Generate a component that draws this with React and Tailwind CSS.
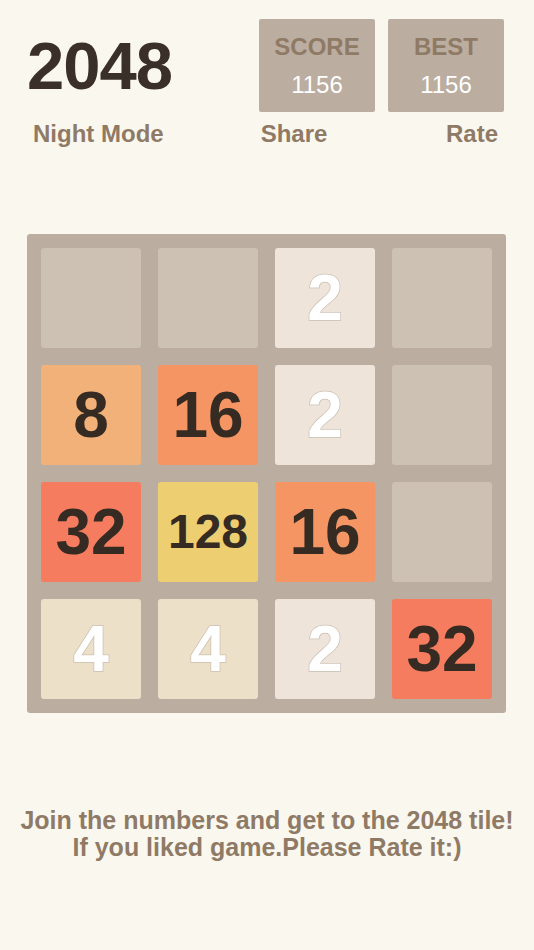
import React from "react";

const board = [
  [0, 0, 2, 0],
  [8, 16, 2, 0],
  [32, 128, 16, 0],
  [4, 4, 2, 32],
];

const tileStyles = {
  0: "bg-[#cdc1b4]",
  2: "bg-[#eee4da] text-white text-[64px] [-webkit-text-stroke:1.5px_#cbbfb2] [paint-order:stroke_fill]",
  4: "bg-[#ede0c8] text-white text-[64px] [-webkit-text-stroke:1.5px_#cbbfb2] [paint-order:stroke_fill]",
  8: "bg-[#f2b179] text-[#352b22] text-[64px]",
  16: "bg-[#f59563] text-[#352b22] text-[64px]",
  32: "bg-[#f67c5f] text-[#352b22] text-[64px]",
  128: "bg-[#edcf72] text-[#352b22] text-[48px]",
};

function Tile({ value }) {
  return (
    <div
      className={`h-[100px] w-[100px] rounded-[3px] flex items-center justify-center font-bold leading-none ${tileStyles[value]}`}
    >
      {value > 0 ? value : ""}
    </div>
  );
}

function ScoreBox({ label, value }) {
  return (
    <div className="w-[116px] h-[93px] rounded-[2px] bg-[#bbada0] flex flex-col items-center pt-[16px]">
      <span className="text-[24px] leading-[24px] font-bold text-[#8f7a66]">{label}</span>
      <span className="mt-[14px] text-[24px] leading-[24px] text-white">{value}</span>
    </div>
  );
}

export default function App() {
  return (
    <div
      className="min-h-[950px] w-full bg-[#faf7ef] flex flex-col"
      style={{ fontFamily: '"Liberation Sans", Arial, sans-serif' }}
    >
      <div className="flex items-center pt-[19px] pl-[27px] pr-[30px]">
        <h1 className="text-[67px] leading-none font-bold text-[#3a3029] tracking-[-1px]">2048</h1>
        <div className="ml-auto flex gap-[13px]">
          <ScoreBox label="SCORE" value="1156" />
          <ScoreBox label="BEST" value="1156" />
        </div>
      </div>

      <div className="flex mt-[10px] text-[24px] leading-[24px] font-bold text-[#8f7a66]">
        <span className="ml-[33px]">Night Mode</span>
        <span className="ml-[97px]">Share</span>
        <span className="ml-auto mr-[36px]">Rate</span>
      </div>

      <div className="mt-[88px] ml-[27px] w-[479px] rounded-[3px] bg-[#bbada0] p-[14px] grid grid-cols-4 gap-[17px]">
        {board.flat().map((v, i) => (
          <Tile key={i} value={v} />
        ))}
      </div>

      <div className="mt-[94px] text-center text-[25px] leading-[27px] font-bold text-[#8f7a66]">
        <p>Join the numbers and get to the 2048 tile!</p>
        <p>If you liked game.Please Rate it:)</p>
      </div>
    </div>
  );
}
